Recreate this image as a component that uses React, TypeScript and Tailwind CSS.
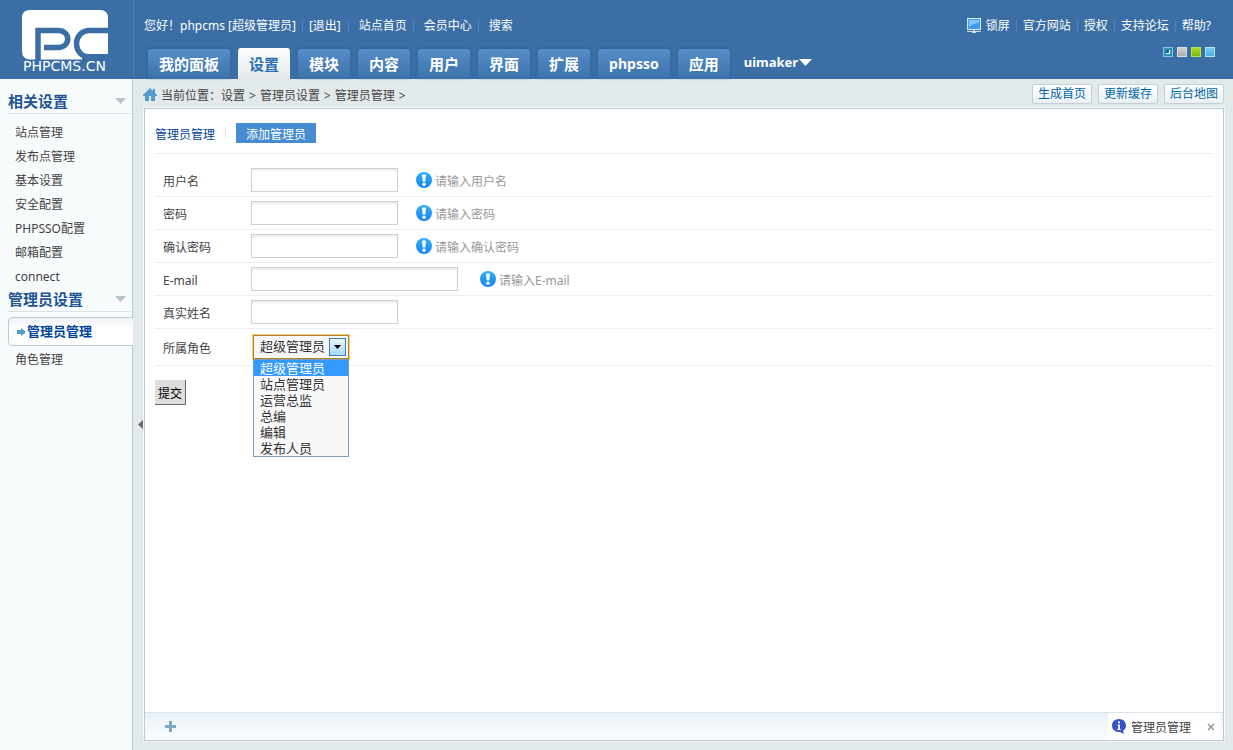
import React from 'react';

const tabs = ['我的面板', '设置', '模块', '内容', '用户', '界面', '扩展', 'phpsso', '应用'];

const menus = [
  {
    title: '相关设置',
    items: ['站点管理', '发布点管理', '基本设置', '安全配置', 'PHPSSO配置', '邮箱配置', 'connect'],
  },
  { title: '管理员设置', items: ['管理员管理', '角色管理'] },
];

const fields = [
  { id: 'username', label: '用户名', type: 'text', width: 'w-[147px]', hint: '请输入用户名' },
  { id: 'password', label: '密码', type: 'password', width: 'w-[147px]', hint: '请输入密码' },
  { id: 'pwdconfirm', label: '确认密码', type: 'password', width: 'w-[147px]', hint: '请输入确认密码' },
  { id: 'email', label: 'E-mail', type: 'text', width: 'w-[207px] mr-1', hint: '请输入E-mail' },
  { id: 'realname', label: '真实姓名', type: 'text', width: 'w-[147px]', hint: '' },
];

const roles = ['超级管理员', '站点管理员', '运营总监', '总编', '编辑', '发布人员'];

const skins = [
  'border-[#8cc4dc] bg-[#2b8fb8]',
  'border-[#dcdcdc] bg-linear-to-b from-[#d2d2d2] to-[#a9abac]',
  'border-[#c5dc62] bg-linear-to-b from-[#b0dc20] to-[#7cb80a]',
  'border-[#b4e2fa] bg-linear-to-b from-[#74c8f2] to-[#48b0ea]',
];

const Logo = () => (
  <a href="#" className="flex w-[133px] shrink-0 flex-col items-center pt-[10px] pr-1">
    <svg width="86" height="50" viewBox="0 0 86 50" aria-hidden="true">
      <path d="M8 0H78Q86 0 86 8V44H60V49.500H8Q0 49.500 0 41V8Q0 0 8 0Z" fill="#fff" />
      <path d="M16 50V20.500H36C49 20.500 49 37.500 36 37.500H22" fill="none" stroke="#3a6ea5" strokeWidth="5.500" />
      <path d="M86 20.500H68C50 20.500 50 47 68 47H86" fill="none" stroke="#3a6ea5" strokeWidth="5.500" />
    </svg>
    <span className="font-['DejaVu_Sans',sans-serif] text-[14px] leading-3 text-white">PHPCMS.CN</span>
  </a>
);

const Divider = () => <span className="h-3 w-px bg-[#4d84bd]" />;

const MonitorIcon = () => (
  <svg width="15" height="16" viewBox="0 0 15 16" aria-hidden="true">
    <rect x="0.500" y="0.500" width="13" height="11" fill="#3d9cf0" stroke="#dcebf8" />
    <path d="M2 2H12V5Q7 5 2 9Z" fill="#7cc4fa" />
    <path d="M6 12H8V14H6Z" fill="#c9d3dc" />
    <path d="M0 13.500H14M5 14.500H9" stroke="#d5dde4" />
  </svg>
);

const HomeIcon = () => (
  <svg width="14" height="13" viewBox="0 0 14 13" className="mb-[3px]" aria-hidden="true">
    <path d="M7 0L10 3V1H12V5L14 7V8H12V13H8V8H6V13H2V8H0V7Z" fill="#539bcd" />
  </svg>
);

const HintIcon = () => (
  <svg width="16" height="16" viewBox="0 0 16 16" aria-hidden="true">
    <defs>
      <linearGradient id="hint" x1="0" y1="0" x2="0" y2="1">
        <stop offset="0" stopColor="#2fb0fa" />
        <stop offset="1" stopColor="#1b84ea" />
      </linearGradient>
    </defs>
    <circle cx="8" cy="8" r="8" fill="url(#hint)" />
    <path d="M6 2.500H10L9.300 9.500H6.700Z" fill="#fff" />
    <circle cx="8" cy="12.300" r="1.700" fill="#fff" />
  </svg>
);

const Header = () => (
  <header className="flex h-[79px] bg-[#3a6ea5] text-white">
    <Logo />
    <div className="flex min-w-0 flex-1 flex-col justify-between border-l border-[#4a80b8] pl-[10px]">
      <div className="flex items-center gap-[6px] pt-4 leading-5 whitespace-nowrap">
        <span>您好！phpcms [超级管理员]</span>
        <Divider />
        <a href="#" className="pr-px">[退出]</a>
        <Divider />
        <a href="#" className="ml-1">站点首页</a>
        <Divider />
        <a href="#" className="ml-1">会员中心</a>
        <Divider />
        <a href="#" className="ml-1">搜索</a>
      </div>
      <nav className="flex items-end gap-2 pl-1 text-[15px] font-bold whitespace-nowrap">
        {tabs.map((tab) => (
          <a
            key={tab}
            href="#"
            className={
              tab === '设置'
                ? 'rounded-t-[3px] bg-linear-to-b from-white to-[#e2e9ea] px-[11px] pt-px leading-[30px] text-[#2a6fb5]'
                : `rounded-t-[3px] bg-linear-to-b from-[#558fcb] to-[#3d71a9] px-[11px] leading-[30px] shadow-[0_-1px_3px_#2c5d93] ${tab === 'phpsso' ? 'text-[14px]' : ''}`
            }
          >
            {tab}
          </a>
        ))}
        <button type="button" className="ml-[6px] flex items-center gap-px pb-1 text-[13px] leading-[26px] font-bold">
          uimaker
          <svg width="13" height="7" viewBox="0 0 13 7" aria-hidden="true">
            <path d="M0 0H13L6.500 7Z" fill="#fff" />
          </svg>
        </button>
      </nav>
    </div>
    <div className="flex flex-col items-end gap-[11px] pt-4 pr-[18px] whitespace-nowrap">
      <div className="flex items-center gap-[6px] pr-1 leading-5">
        <a href="#" className="flex items-center gap-1">
          <MonitorIcon />
          锁屏
        </a>
        <Divider />
        <a href="#">官方网站</a>
        <Divider />
        <a href="#">授权</a>
        <Divider />
        <a href="#">支持论坛</a>
        <Divider />
        <a href="#">帮助?</a>
      </div>
      <div className="flex gap-1">
        {skins.map((skin, i) => (
          <button key={skin} type="button" aria-label={`skin ${i + 1}`} className={`flex h-[10px] w-[10px] items-center justify-center border ${skin}`}>
            {i === 0 && <span className="h-1 w-1 border-r border-b border-white bg-[#1b5f86]" />}
          </button>
        ))}
      </div>
    </div>
  </header>
);

const Sidebar = () => (
  <aside className="w-[133px] shrink-0 border-r border-[#b9cbd6] bg-[#f7fbfc] pt-[10px]">
    {menus.map((menu) => (
      <section key={menu.title}>
        <h3 className="ml-2 flex items-center justify-between border-b border-[#d9e2e6] pr-[6px] text-[15px] leading-6 font-bold text-[#1f5693]">
          {menu.title}
          <svg width="11" height="6" viewBox="0 0 11 6" aria-hidden="true">
            <path d="M0 0H11L5.500 6Z" fill="#b4c4c8" />
          </svg>
        </h3>
        <ul className="pt-[5px]">
          {menu.items.map((item) =>
            item === '管理员管理' ? (
              <li key={item} className="-mr-px ml-2 rounded-l-[5px] border border-r-0 border-[#b9cbd6] bg-linear-to-b from-[#eef1f2] to-white to-40%">
                <a href="#" className="flex items-center gap-px pl-2 text-[13px] leading-[27px] font-bold text-[#004499]">
                  <svg width="9" height="8" viewBox="0 0 9 8" aria-hidden="true">
                    <path d="M0 2H4V0L9 4L4 8V6H0Z" fill="#4f9bc9" />
                  </svg>
                  {item}
                </a>
              </li>
            ) : (
              <li key={item}>
                <a href="#" className="block pt-[3px] pl-[15px] leading-[21px]">{item}</a>
              </li>
            ),
          )}
        </ul>
      </section>
    ))}
  </aside>
);

const RoleSelect = () => (
  <div className="relative ml-[2px] w-24">
    <select
      id="role"
      className="block h-6 w-full appearance-none border border-[#b5822c] bg-[#f8f8f8] pl-[6px] text-[13px] text-[#333] shadow-[0_0_0_1px_#f3cd7c] outline-none"
    >
      {roles.map((role) => (
        <option key={role}>{role}</option>
      ))}
    </select>
    <span className="pointer-events-none absolute top-[3px] right-[3px] flex h-[18px] w-[17px] items-center justify-center border border-[#3c7fb1] bg-linear-to-b from-[#eaf6fd] to-[#a7d9f5]">
      <svg width="7" height="4" viewBox="0 0 7 4" aria-hidden="true">
        <path d="M0 0H7L3.500 4Z" fill="#000" />
      </svg>
    </span>
    <ul role="listbox" className="absolute top-full left-0 w-full border border-[#7f9db9] bg-[#f8f8f8] text-[13px] leading-4 text-[#333]">
      {roles.map((role, i) => (
        <li key={role} role="option" aria-selected={i === 0} className={i === 0 ? 'bg-[#3399ff] pl-[6px] text-white' : 'pl-[6px]'}>
          {role}
        </li>
      ))}
    </ul>
  </div>
);

const AdminForm = () => (
  <form className="flex-1 px-[10px]">
    <div className="flex items-center border-b border-[#eee] pt-[14px] pb-[10px]">
      <a href="#" className="pt-[3px] leading-[17px] text-[#004499]">管理员管理</a>
      <span className="mx-[10px] h-3 w-px bg-[#dfe6e8]" />
      <a href="#" className="rounded-[1px] bg-[#468bd0] px-[10px] pt-[3px] leading-[17px] text-white">添加管理员</a>
    </div>
    <div className="pt-[10px]">
      {fields.map((field) => (
        <div key={field.id} className="flex h-[33px] items-center border-b border-[#eee]">
          <label htmlFor={field.id} className="w-24 pt-[3px] pl-2">{field.label}</label>
          <input
            id={field.id}
            type={field.type}
            className={`h-6 border border-[#d0d0d0] bg-white px-1 shadow-[inset_0_2px_2px_#eee] outline-none ${field.width}`}
          />
          {field.hint && (
            <span className="ml-[18px] flex items-center gap-[3px] text-[#999]">
              <HintIcon />
              <span className="pt-[3px]">{field.hint}</span>
            </span>
          )}
        </div>
      ))}
      <div className="flex h-[37px] items-center border-b border-[#eee]">
        <label htmlFor="role" className="w-24 pt-[3px] pl-2">所属角色</label>
        <RoleSelect />
      </div>
    </div>
    <button type="submit" className="mt-[14px] border-r border-b border-[#696969] bg-[#ddd] px-[3px] pt-[3px] leading-[21px] text-black">
      提交
    </button>
  </form>
);

const FootBar = () => (
  <footer className="flex h-7 items-center justify-between border-t border-[#dbe6ea] bg-linear-to-b from-[#eaf1f6] to-[#fbfdfe] pr-[2px]">
    <button type="button" aria-label="添加" className="ml-5">
      <svg width="11" height="11" viewBox="0 0 11 11" aria-hidden="true">
        <path d="M4 0H7V4H11V7H7V11H4V7H0V4H4Z" fill="#7fa9c2" />
      </svg>
    </button>
    <div className="flex h-full items-center bg-white pr-[6px] pl-1">
      <svg width="14" height="15" viewBox="0 0 14 15" aria-hidden="true">
        <path d="M7 0C11 0 14 2.800 14 6.500C14 9 12.700 10.800 11 11.800L12 15L8 13C3 13.300 0 10.300 0 6.500C0 2.800 3 0 7 0Z" fill="#3355c8" />
        <path d="M6 2.500H8V4.300H6ZM5.500 5.500H8V10H8.700V11H5.300V10H6.200V6.500H5.500Z" fill="#fff" />
      </svg>
      <a href="#" className="ml-[5px] pt-[3px] leading-6">管理员管理</a>
      <button type="button" aria-label="关闭" className="ml-4">
        <svg width="8" height="8" viewBox="0 0 8 8" aria-hidden="true">
          <path d="M1 1L7 7M7 1L1 7" stroke="#999" strokeWidth="1.600" />
        </svg>
      </button>
    </div>
  </footer>
);

const App = () => {
  return (
    <div className="flex min-h-screen flex-col bg-[#e2e9ea] font-['Noto_Sans','Noto_Sans_CJK_SC',sans-serif] text-[12px] text-[#444]">
      <Header />
      <div className="flex flex-1">
        <Sidebar />
        <main className="flex min-w-0 flex-1 flex-col pr-[9px] pb-[9px]">
          <div className="flex h-[29px] items-center justify-between pl-[10px]">
            <div className="flex items-center gap-1 pt-1 whitespace-nowrap">
              <HomeIcon />
              <span>当前位置：设置</span>
              <span>&gt;</span>
              <span>管理员设置</span>
              <span>&gt;</span>
              <span>管理员管理</span>
              <span>&gt;</span>
            </div>
            <div className="flex gap-[6px]">
              {['生成首页', '更新缓存', '后台地图'].map((text) => (
                <a
                  key={text}
                  href="#"
                  className="rounded-[2px] border border-[#c2d1d8] bg-linear-to-b from-white to-[#eaf0f1] px-[5px] leading-[18px] whitespace-nowrap text-[#0066aa]"
                >
                  {text}
                </a>
              ))}
            </div>
          </div>
          <div className="flex flex-1">
            <button type="button" aria-label="展开与关闭" className="flex w-[11px] items-center justify-end pr-px">
              <svg width="5" height="9" viewBox="0 0 5 9" aria-hidden="true">
                <path d="M5 0V9L0 4.500Z" fill="#6b6b6b" />
              </svg>
            </button>
            <div className="flex min-w-0 flex-1 flex-col border border-[#b9cbd6] bg-white shadow-[0_0_0_1px_#f2f6f7]">
              <AdminForm />
              <FootBar />
            </div>
          </div>
        </main>
      </div>
    </div>
  );
};

export default App;
